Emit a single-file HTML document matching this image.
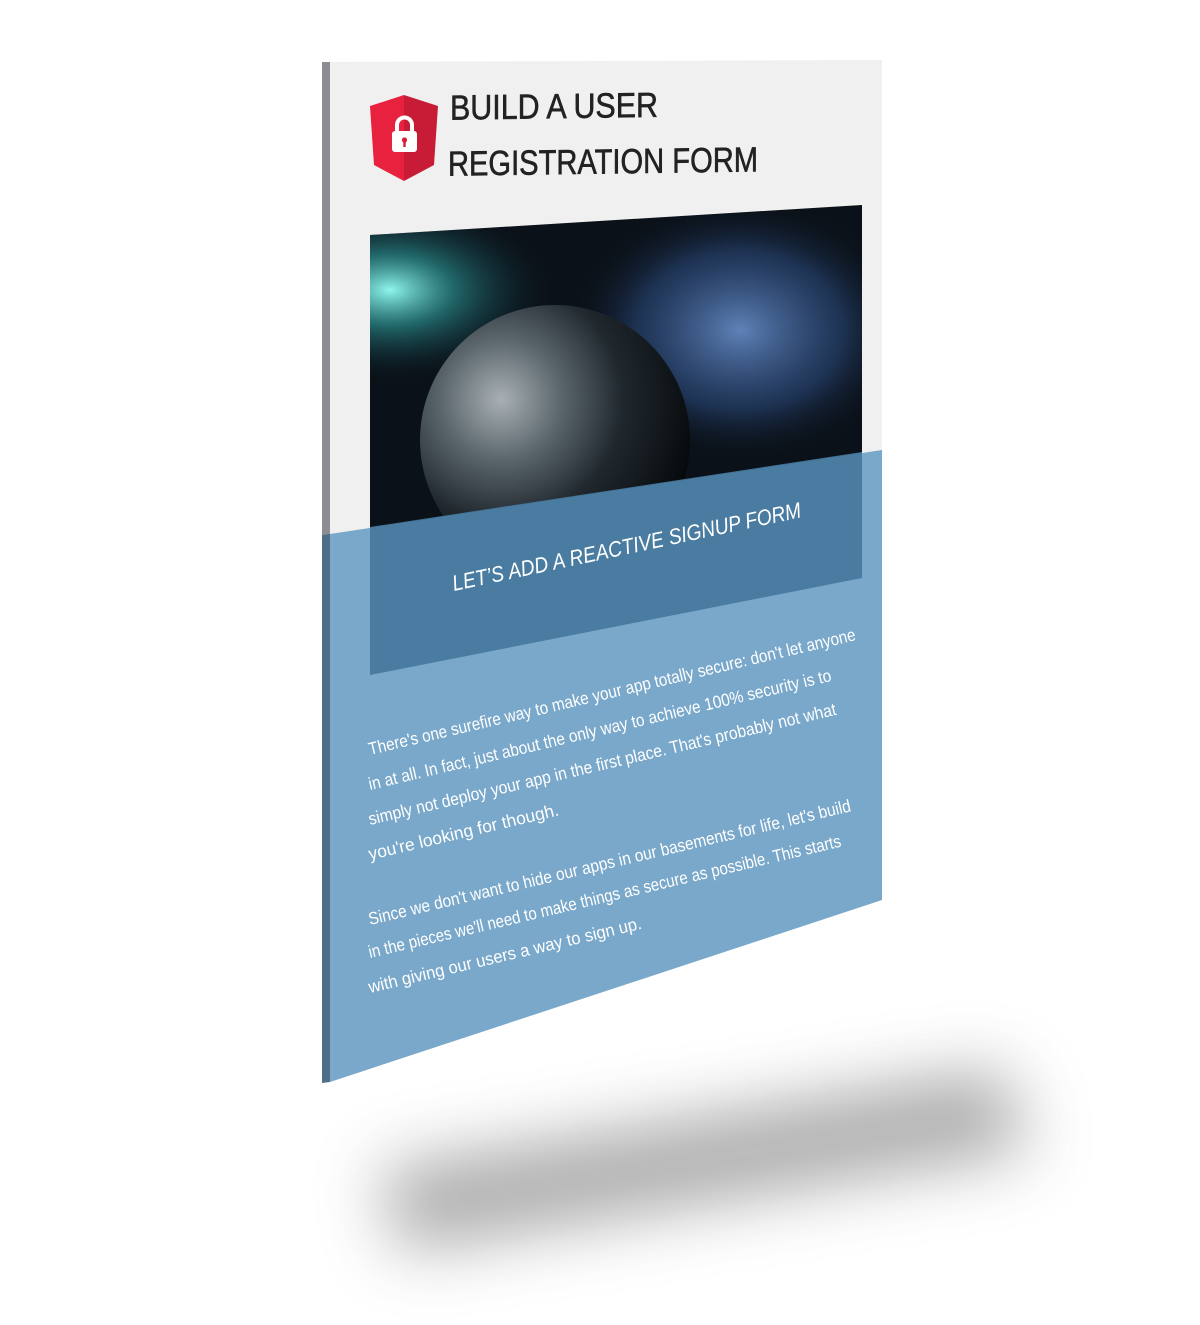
<!DOCTYPE html>
<html><head><meta charset="utf-8"><style>
html,body{margin:0;padding:0;background:#fff;width:1200px;height:1325px;overflow:hidden}
svg{display:block}
</style></head><body>
<svg width="1200" height="1325" viewBox="0 0 1200 1325" xmlns="http://www.w3.org/2000/svg">
<defs>
<filter id="blur" x="-50%" y="-50%" width="200%" height="200%"><feGaussianBlur stdDeviation="34"/></filter>
<clipPath id="img"><polygon points="370,235 862,205 862,578 370,675"/></clipPath>
<radialGradient id="planet" cx="0.3" cy="0.35" r="0.75">
<stop offset="0" stop-color="#a9b0b4"/><stop offset="0.3" stop-color="#5a666c"/><stop offset="0.6" stop-color="#20282e"/><stop offset="1" stop-color="#05080a"/></radialGradient>
<radialGradient id="glow" cx="0.5" cy="0.5" r="0.5">
<stop offset="0" stop-color="#8ff5ea"/><stop offset="0.4" stop-color="#2a8c8c" stop-opacity="0.7"/><stop offset="1" stop-color="#0b2430" stop-opacity="0"/></radialGradient>
<radialGradient id="neb" cx="0.5" cy="0.5" r="0.5">
<stop offset="0" stop-color="#5f82b8"/><stop offset="0.6" stop-color="#2b4a7c" stop-opacity="0.6"/><stop offset="1" stop-color="#0a1424" stop-opacity="0"/></radialGradient>
<linearGradient id="shield" x1="0" x2="1"><stop offset="0.5" stop-color="#e8213e"/><stop offset="0.5" stop-color="#c81c36"/></linearGradient>
</defs>
<!-- shadow -->
<polygon points="380,1170 1000,1070 1030,1150 400,1250" fill="#707070" opacity="0.6" filter="url(#blur)"/>
<!-- cover -->
<polygon points="322,62 882,60 882,900 322,1082" fill="#f0f0f0"/>
<polygon points="322,62 330,62 330,1080 322,1082" fill="#8c8c92"/>
<!-- image -->
<g clip-path="url(#img)">
<rect x="370" y="200" width="495" height="480" fill="#0b1118"/>
<ellipse cx="740" cy="330" rx="170" ry="130" fill="url(#neb)"/>
<ellipse cx="390" cy="290" rx="160" ry="90" fill="url(#glow)"/>
<circle cx="555" cy="440" r="135" fill="url(#planet)"/>
</g>
<!-- blue plane -->
<polygon points="330,534 882,450 882,900 330,1082" fill="#79a8ca"/>
<polygon points="322,535 330,534 330,1082 322,1083" fill="#4e6f88"/>
<polygon points="370,527 862,452 862,578 370,675" fill="#47789d" opacity="0.92"/>
<!-- shield -->
<polygon points="404,95 438,106 434,165 404,181 374,165 370,106" fill="url(#shield)"/>
<rect x="392" y="131" width="25" height="21" rx="3" fill="#fff"/>
<path d="M397,131 v-6 a7.5,7.5 0 0 1 15,0 v6" fill="none" stroke="#fff" stroke-width="4"/>
<circle cx="404.5" cy="140" r="2.6" fill="#d81f39"/><rect x="403.3" y="140" width="2.4" height="7" fill="#d81f39"/>
<!-- title -->
<g font-family="Liberation Sans, sans-serif" fill="#222" font-size="35" stroke="#222" stroke-width="0.6">
<text x="450" y="120" transform="skewY(-0.8) translate(0,6)" textLength="208" lengthAdjust="spacingAndGlyphs">BUILD A USER</text>
<text x="448" y="176" transform="skewY(-0.8) translate(0,6)" textLength="310" lengthAdjust="spacingAndGlyphs">REGISTRATION FORM</text>
</g>
<!-- subtitle -->
<text x="454" y="591" transform="rotate(-12 454 591)" font-family="Liberation Sans, sans-serif" font-style="italic" font-size="22" fill="#fff" textLength="356" lengthAdjust="spacingAndGlyphs">LET’S ADD A REACTIVE SIGNUP FORM</text>
<!-- body -->
<g font-family="Liberation Sans, sans-serif" font-size="17.5" fill="#fff">
<text x="370" y="755" transform="rotate(-13.3 370 755)" textLength="500" lengthAdjust="spacingAndGlyphs">There's one surefire way to make your app totally secure: don't let anyone</text>
<text x="370" y="790" transform="rotate(-13.3 370 790)" textLength="475" lengthAdjust="spacingAndGlyphs">in at all. In fact, just about the only way to achieve 100% security is to</text>
<text x="370" y="825" transform="rotate(-13.3 370 825)" textLength="480" lengthAdjust="spacingAndGlyphs">simply not deploy your app in the first place. That's probably not what</text>
<text x="370" y="860" transform="rotate(-13.3 370 860)" textLength="195" lengthAdjust="spacingAndGlyphs">you're looking for though.</text>
<text x="370" y="925" transform="rotate(-13.3 370 925)" textLength="495" lengthAdjust="spacingAndGlyphs">Since we don't want to hide our apps in our basements for life, let's build</text>
<text x="370" y="958" transform="rotate(-13.3 370 958)" textLength="485" lengthAdjust="spacingAndGlyphs">in the pieces we'll need to make things as secure as possible. This starts</text>
<text x="370" y="993" transform="rotate(-13.3 370 993)" textLength="280" lengthAdjust="spacingAndGlyphs">with giving our users a way to sign up.</text>
</g>
</svg>
</body></html>
